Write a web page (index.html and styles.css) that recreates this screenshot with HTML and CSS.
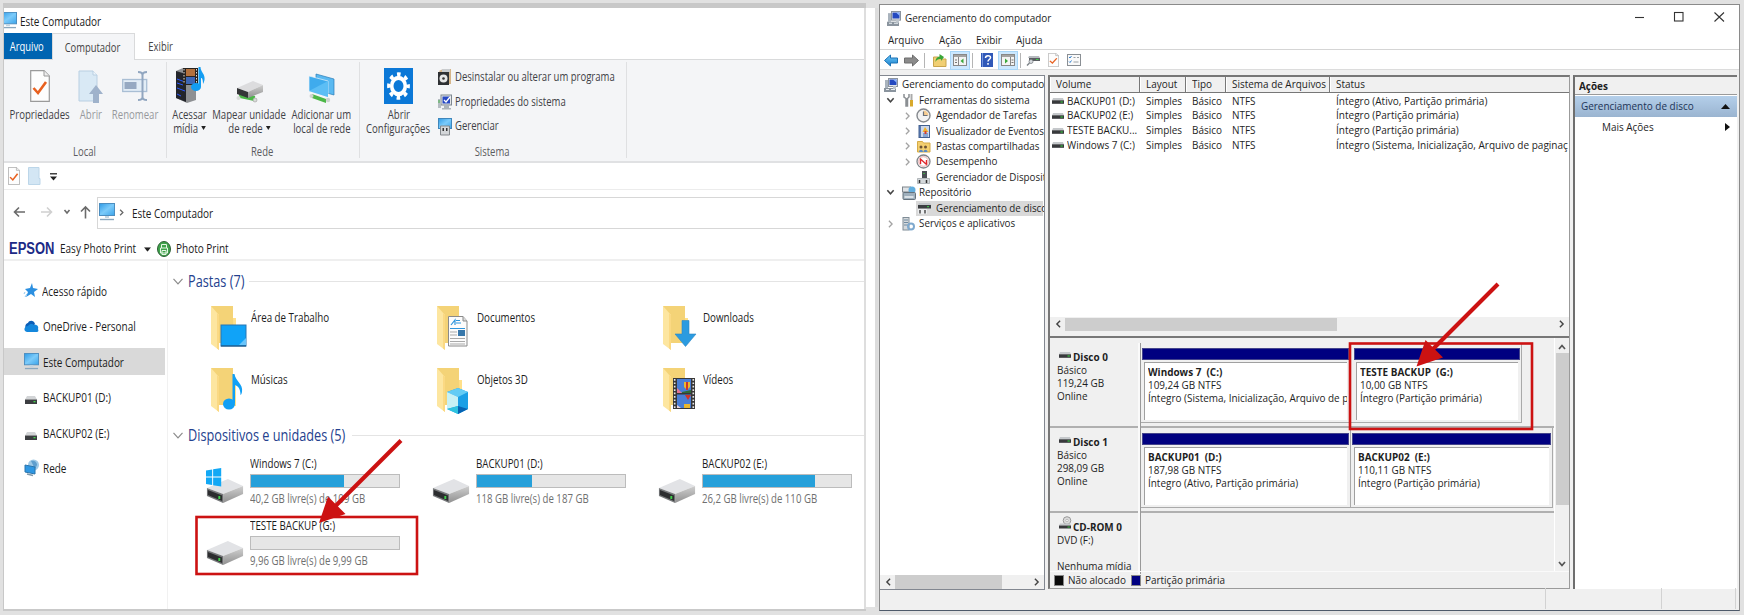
FILE: index.html
```html
<!DOCTYPE html>
<html lang="pt-BR">
<head>
<meta charset="utf-8">
<title>Este Computador</title>
<link rel="stylesheet" href="styles.css">
</head>
<body>
<svg class="defs" width="0" height="0" aria-hidden="true">
  <defs>
    <linearGradient id="gScreen" x1="0" y1="0" x2="1" y2="1"><stop offset="0" stop-color="#2f9be6"/><stop offset=".5" stop-color="#7ccbfa"/><stop offset="1" stop-color="#3aa4ea"/></linearGradient>
    <linearGradient id="gSide" x1="0" y1="0" x2="0" y2="1"><stop offset="0" stop-color="#cfcfcf"/><stop offset="1" stop-color="#909090"/></linearGradient>
    <linearGradient id="gArrow" x1="0" y1="0" x2="0" y2="1"><stop offset="0" stop-color="#6fc8f7"/><stop offset="1" stop-color="#1a82cf"/></linearGradient>
    <symbol id="pc" viewBox="0 0 16 18"><rect x=".5" y=".5" width="15" height="12" fill="url(#gScreen)" stroke="#4c8ec0"/><path d="M6 13h4v2H6z" fill="#c3d4e0"/><path d="M1 16.5h14" stroke="#8aa7be" stroke-width="1.4"/></symbol>
    <symbol id="folder" viewBox="0 0 36 46"><path d="M1 1H23V13H26V38H8Z" fill="#f4d377"/><path d="M23 13l3 0v26h-2z" fill="#ffe08a"/><path d="M1 1L9 10V45L1 39Z" fill="#fde6a0"/><path d="M9 10V45L7 43.500V8z" fill="#fbd983"/></symbol>
    <symbol id="drive" viewBox="0 0 40 26"><path d="M1 10L23 1L39 8L18 16Z" fill="#e2e3e6"/><path d="M18 16L39 8V16L18 25Z" fill="url(#gSide)"/><path d="M1 10L18 16V25L1 18Z" fill="#77797b"/><path d="M2 12L17 17.500V23L2 17Z" fill="#2c2d2f"/><rect x="13" y="18" width="2" height="3" fill="#3fd04a"/></symbol>
    <symbol id="sdrive" viewBox="0 0 12 8"><path d="M2 0H10L12 3.500H0Z" fill="#d2d4d6"/><rect y="3.500" width="12" height="4.500" fill="#3c3e41"/><rect x="8.500" y="5" width="2" height="1.300" fill="#41d449"/></symbol>
    <symbol id="mdrive" viewBox="0 0 12 6"><path d="M1 0H11L12 2.500H0Z" fill="#c5c8cb"/><rect y="2.300" width="12" height="3.500" fill="#38393c"/><rect x="8.500" y="3.400" width="2.300" height="1.200" fill="#37c540"/></symbol>
    <symbol id="page" viewBox="0 0 20 32"><path d="M.7.7H14L19.300 6V31.300H.7Z" fill="#fdfdfd" stroke="#9a9a9a" stroke-width="1.200"/><path d="M14 .7V6H19.300" fill="#eee" stroke="#9a9a9a"/><path d="M3.500 18l4.500 5 8-11" fill="none" stroke="#e8601f" stroke-width="2.600"/></symbol>
    <symbol id="mmc" viewBox="0 0 14 14"><rect x="4.500" y=".5" width="9" height="8" fill="#dfe3e8" stroke="#8b949e"/><rect x="5.500" y="1.500" width="7" height="5.500" fill="#2449c0"/><path d="M9 1.500l3.500 0v3z" fill="#8fb8ff"/><rect x="1" y="2" width="3" height="8" fill="#a9b3bd"/><path d="M0 10h12v4H0z" fill="#8a949e"/><path d="M2 11.500h3M7 11.500h4" stroke="#e8edf2"/><path d="M9 8h3v3H9z" fill="#bfc6cd"/></symbol>
    <symbol id="right" viewBox="0 0 6 10"><path d="M1 1l4 4-4 4" fill="none" stroke="#a3a3a3" stroke-width="1.600"/></symbol>
    <symbol id="down" viewBox="0 0 10 7"><path d="M1.500 1L5 5l3.500-4" fill="none" stroke="#444" stroke-width="1.700"/></symbol>
    <symbol id="caret" viewBox="0 0 10 7"><path d="M.5 .8L5 5.800l4.500-5" fill="none" stroke="#8c8c8c" stroke-width="1.200"/></symbol>
    <symbol id="tri" viewBox="0 0 6 4"><path d="M0 0h6L3 4z" fill="#222"/></symbol>
  </defs>
</svg>

<div class="desk">
<!-- File explorer -->
<section class="explorer">
  <header class="ex-title"><svg class="cut" width="13" height="17" viewBox="3 0 13 18" preserveAspectRatio="none"><rect x="0" y=".5" width="15.500" height="12" fill="url(#gScreen)" stroke="#4c8ec0"/><path d="M5 13h4v2H5z" fill="#c3d4e0"/><path d="M0 16.500h15" stroke="#8aa7be" stroke-width="1.400"/></svg><span class="t big">Este Computador</span></header>
  <nav class="tabs"><span class="tab file"><b class="t">Arquivo</b></span><span class="tab on"><b class="t wide">Computador</b></span><span class="tab"><b class="t">Exibir</b></span></nav>
  <div class="ribbon">
    <div class="group g-local">
      <div class="btns">
        <div class="btn w-prop"><div class="ic"><svg width="20" height="32"><use href="#page"/></svg></div><span class="t">Propriedades</span></div>
        <div class="btn off w-abrir"><div class="ic"><svg width="26" height="34" viewBox="0 0 26 34"><path d="M1 1H15L19 5V31H1Z" fill="#d9e9f5" stroke="#b9cfe2"/><path d="M15 1v4h4" fill="#eef5fb" stroke="#b9cfe2"/><path d="M18 15L25 24H21V33H15V24H11Z" fill="#9fb2cb"/></svg></div><span class="t">Abrir</span></div>
        <div class="btn off w-ren"><div class="ic"><svg width="26" height="32" viewBox="0 0 26 32"><rect x=".7" y="9.500" width="24" height="12" fill="#e2edf6" stroke="#a9bed4" stroke-width="1.300"/><rect x="2.500" y="12" width="12" height="7" fill="#96a9c2"/><path d="M16 2c3 0 4.500 1 4.500 3v22c0 2-1.500 3-4.500 3M25 2c-3 0-4.500 1-4.500 3v22c0 2 1.500 3 4.500 3" fill="none" stroke="#91a6c0" stroke-width="2"/></svg></div><span class="t">Renomear</span></div>
      </div>
      <div class="cap"><span class="t">Local</span></div>
    </div>
    <div class="group g-rede">
      <div class="btns">
        <div class="btn w-media"><div class="ic"><svg width="28" height="36" viewBox="0 0 28 36"><path d="M0 4l7-3 13 3v29l-9 3-11-5z" fill="#8e9093"/><path d="M0 4l10 3v28L0 31z" fill="#23252b"/><path d="M1 12l8 3M1 16l6 2M1 21l8 3M1 27l4 2" stroke="#2a58ff"/><rect x="7" y="1" width="15" height="17" fill="#27231f"/><rect x="10" y="2" width="9" height="7" fill="#b4713c"/><rect x="10" y="10" width="9" height="7" fill="#3d66b4"/><path d="M8 2v15M20.500 2v15" stroke="#ddd" stroke-dasharray="1.500 1.500"/><ellipse cx="20" cy="20" rx="5" ry="4" fill="#139df2"/><path d="M22.500 0h2c0 5 5 7 4 13-.5 2-1 3-1.500 4 0-5-1-6-2-6v9h-2.500z" fill="#139df2"/></svg></div><span class="t">Acessar</span><span class="t">mídia <svg class="dd" width="6" height="4"><use href="#tri"/></svg></span></div>
        <div class="btn w-map"><div class="ic low"><svg width="28" height="24" viewBox="0 0 28 24"><path d="M3 14h16v5H3z" fill="#4cb748" transform="rotate(12 9 16)"/><circle cx="19" cy="20" r="2" fill="#d9dcd9" stroke="#9a9a9a" stroke-width=".6"/><circle cx="2.500" cy="18" r="2" fill="#d9dcd9"/><path d="M1 8L17 1L27 5L12 12Z" fill="#dcdcde"/><path d="M12 12L27 5V12L12 18Z" fill="url(#gSide)"/><path d="M1 8L12 12V18L1 14Z" fill="#343537"/></svg></div><span class="t">Mapear unidade</span><span class="t">de rede <svg class="dd" width="6" height="4"><use href="#tri"/></svg></span></div>
        <div class="btn w-add"><div class="ic"><svg width="28" height="30" viewBox="0 0 28 30"><path d="M8 1L26 6V22L8 17Z" fill="#5ab9f1" stroke="#2a7db8" stroke-width=".7"/><path d="M1 3L20 8V24L1 18Z" fill="#3fabed" stroke="#e8f4fb" stroke-width=".7"/><path d="M1 18L20 8V24z" fill="#5cbef5"/><path d="M4 21l14 5v4L4 25z" fill="#4cb748"/><circle cx="20" cy="27" r="2.200" fill="#cfd3d0"/><circle cx="3.500" cy="23" r="2" fill="#cfd3d0"/></svg></div><span class="t">Adicionar um</span><span class="t">local de rede</span></div>
      </div>
      <div class="cap"><span class="t">Rede</span></div>
    </div>
    <div class="group g-sys">
      <div class="sysrow">
        <div class="btn w-conf"><div class="ic"><svg class="gear" width="29" height="36" viewBox="0 0 29 36" preserveAspectRatio="none"><rect width="29" height="36" fill="#0b78d7"/><g transform="translate(14.500 18) scale(1 1.200)"><circle r="6.800" fill="none" stroke="#fff" stroke-width="3.600"/><circle r="9.800" fill="none" stroke="#fff" stroke-width="3.200" stroke-dasharray="3.600 4.097" stroke-dashoffset="1.800"/></g></svg></div><span class="t">Abrir</span><span class="t">Configurações</span></div>
        <ul class="links">
          <li><svg width="14" height="18" viewBox="0 0 14 18"><path d="M1 3l4-2h8v15h-3z" fill="#d5b58a"/><path d="M4 1h8v3H4z" fill="#c9cccf"/><rect y="4" width="11" height="13" fill="#2e3033"/><circle cx="5.500" cy="10.500" r="4" fill="#e6e6e6"/><circle cx="5.500" cy="10.500" r="1.300" fill="#333"/></svg><span class="t wide">Desinstalar ou alterar um programa</span></li>
          <li><svg width="14" height="16" viewBox="0 0 14 16"><rect x="3" y="1" width="10.500" height="10" fill="#e4e6e8" stroke="#7d8790"/><rect x="4.500" y="2.500" width="7.500" height="7" fill="#2748c4"/><path d="M6 6l2 2 4-5" fill="none" stroke="#fff" stroke-width="1.300"/><path d="M0 5h3v9H0z" fill="#b5bcc2"/><path d="M1 6v3" stroke="#46b24a"/><path d="M6 11h5v3H6zM4 14h9v1.500H4z" fill="#adb4ba"/></svg><span class="t wide">Propriedades do sistema</span></li>
          <li><svg width="14" height="17" viewBox="0 0 14 17"><rect x=".5" y=".5" width="13" height="10" fill="url(#gScreen)" stroke="#3f86bb"/><path d="M2.500 8h9v9h-9z" fill="#d3d6d9" stroke="#84898d"/><path d="M4.500 10h1.500v3H4.500zM8 10h1.500v3H8z" fill="#333"/></svg><span class="t wide">Gerenciar</span></li>
        </ul>
      </div>
      <div class="cap"><span class="t">Sistema</span></div>
    </div>
  </div>
  <div class="qat"><svg width="12" height="18" viewBox="0 0 20 32" preserveAspectRatio="none"><use href="#page" width="20" height="32"/></svg><svg width="12" height="18" viewBox="0 0 12 18"><path d="M.5.500H11V11.500H12V17.500H.5Z" fill="#d3e6f4" stroke="#bcd6e9"/></svg><svg width="7" height="8" viewBox="0 0 7 8"><path d="M0 .8h7" stroke="#222" stroke-width="1.300"/><path d="M0 3.500h7L3.500 7.500z" fill="#222"/></svg></div>
  <div class="addr">
    <svg class="nav" width="84" height="14" viewBox="0 0 84 14"><g fill="none" stroke="#6b6b6b" stroke-width="1.600"><path d="M12 7H2M6 2.500L1.500 7L6 11.500"/><path d="M28 7h10M34 2.500L38.500 7L34 11.500" stroke="#d0d0d0"/><path d="M51.500 5l2.500 3L56.500 5"/><path d="M72.500 13.500V2M68 6.500L72.500 2L77 6.500"/></g></svg>
    <div class="box"><svg width="16" height="18"><use href="#pc"/></svg><svg class="sep" width="5" height="7" viewBox="0 0 6 10"><path d="M1 1l4 4-4 4" fill="none" stroke="#666" stroke-width="1.800"/></svg><span class="t big">Este Computador</span></div>
  </div>
  <div class="epson"><span class="brand"><b>EPSON</b></span><span class="easy"><i class="t">Easy Photo Print</i></span><svg width="7" height="5" viewBox="0 0 6 4"><use href="#tri" width="6" height="4"/></svg><svg class="pp" width="14" height="16" viewBox="0 0 14 16"><ellipse cx="7" cy="8" rx="6.500" ry="7.500" fill="#3fa34b" stroke="#2f5e37"/><path d="M4.500 7V3.500h5V7M3.500 7h7v5h-7zM5 9.500h4v4H5z" fill="none" stroke="#e6f6e6"/></svg><span class="t">Photo Print</span></div>
  <div class="body">
    <aside class="side">
      <div class="item"><svg width="14" height="15" viewBox="0 0 14 15"><path d="M8 0l1 5 5 1-4 3 1 5-4-3-5 3 2-5-3-3 5-1z" fill="#2b8fe0"/><path d="M1 9l-1 2M3 11l-2 3" stroke="#8ec6f0"/></svg><span class="t">Acesso rápido</span></div>
      <div class="item"><svg width="15" height="12" viewBox="0 0 15 12"><path d="M2 9C0 5 3 3 4 3c1-3 6-3 7 1l-5 6z" fill="#0c5fb8"/><path d="M3 12c-4-1-3-6 1-6 2-3 5-2 6-1 3-1 5 2 4 4 1 2 0 3-1 3z" fill="#1487dc"/></svg><span class="t">OneDrive - Personal</span></div>
      <div class="item sel"><svg width="15" height="17"><use href="#pc"/></svg><span class="t">Este Computador</span></div>
      <div class="item dr"><svg width="12" height="8"><use href="#sdrive"/></svg><span class="t">BACKUP01 (D:)</span></div>
      <div class="item dr"><svg width="12" height="8"><use href="#sdrive"/></svg><span class="t">BACKUP02 (E:)</span></div>
      <div class="item"><svg width="15" height="18" viewBox="0 0 15 18"><circle cx="9.500" cy="6" r="5.500" fill="#9fc9e6"/><path d="M7 2c2-1 6 0 6 4l-2 4z" fill="#5f9fce"/><path d="M1 6l10 2v7L1 13z" fill="#2f97e2" stroke="#2a74ac"/><path d="M3 15l6 1.500" stroke="#7f98aa" stroke-width="1.500"/></svg><span class="t">Rede</span></div>
    </aside>
    <main class="content">
      <h2 class="h-past"><svg width="10" height="7"><use href="#caret"/></svg><span class="hw"><b class="t">Pastas (7)</b></span></h2>
      <div class="grid folders">
        <div class="fold"><div class="fi"><svg width="36" height="46" viewBox="0 0 36 46"><use href="#folder" width="36" height="46"/><rect x="11" y="20" width="25" height="21" fill="#10a3f8" stroke="#2677b4"/><path d="M36 33v7h-7z" fill="#69c5fb"/><path d="M11 41h25" stroke="#1b4e7c"/></svg></div><span class="t">Área de Trabalho</span></div>
        <div class="fold"><div class="fi"><svg width="36" height="46" viewBox="0 0 36 46"><use href="#folder" width="36" height="46"/><path d="M12.500 11.500H27L31 16V41H12.500Z" fill="#fcfcfc" stroke="#8b8b8b"/><path d="M27 11.500V16h4" fill="#ddd" stroke="#8b8b8b"/><path d="M15 20l4-5v5M20 18h5M20 15.500h4M14 23.500h15" fill="none" stroke="#2d95dd" stroke-width="1.200"/><path d="M14 27h7M14 30h7M14 33.500h15M14 36.500h15M14 39h15" stroke="#a9a9a9"/><rect x="22" y="25" width="7" height="6" fill="#3878ab"/></svg></div><span class="t">Documentos</span></div>
        <div class="fold"><div class="fi"><svg width="36" height="46" viewBox="0 0 36 46"><use href="#folder" width="36" height="46"/><path d="M20 15.500h7V29h7L23.500 41.500L13 29h7z" fill="#2b9be0" stroke="#2b87c5" stroke-width=".6"/></svg></div><span class="t">Downloads</span></div>
        <div class="fold"><div class="fi"><svg width="36" height="46" viewBox="0 0 36 46"><use href="#folder" width="36" height="46"/><path d="M22.500 7h2c1 7 9 10 7.500 18-.4 2-1 3-1.500 3 0-7-3-9-5.500-10v18h-2.500z" fill="#11a0f5"/><ellipse cx="19" cy="37" rx="6" ry="5.500" fill="#11a0f5"/></svg></div><span class="t">Músicas</span></div>
        <div class="fold"><div class="fi"><svg width="36" height="48" viewBox="0 0 36 48"><use href="#folder" width="36" height="46"/><path d="M11 25L22 21L32 25V42L22 47L11 42Z" fill="#1a9fe6"/><path d="M11 25L22 21L32 25L22 30Z" fill="#63ccf5"/><path d="M11 25L22 30V39L11 42Z" fill="#c7f1f5"/><path d="M11 42L22 39V47Z" fill="#2fc3df"/><path d="M22 39L32 42L22 47Z" fill="#0663b3"/></svg></div><span class="t">Objetos 3D</span></div>
        <div class="fold"><div class="fi"><svg width="36" height="46" viewBox="0 0 36 46"><use href="#folder" width="36" height="46"/><rect x="11" y="11" width="22" height="31" fill="#383737"/><path d="M12.700 12v29M31.300 12v29" stroke="#e8e8e8" stroke-width="1.600" stroke-dasharray="1.700 1.700"/><path d="M15 12h14v14H15zM15 27.500h14V41H15z" fill="#4a7ed6"/><path d="M22 15h6v5l-3 3-3-3z" fill="#eab730"/><path d="M24 15h2v8h-2zM23 28h6l-3 5z" fill="#cf3428"/><path d="M15 21l5 5h-5z" fill="#e57694"/><path d="M20 25l9-2v3h-9z" fill="#2f6b36"/><path d="M22 37h6v4h-6z" fill="#eab730"/><path d="M15 38l4 3h-4z" fill="#e9d4dc"/></svg></div><span class="t">Vídeos</span></div>
      </div>
      <h2 class="h-dev"><svg width="10" height="7"><use href="#caret"/></svg><span class="hw"><b class="t">Dispositivos e unidades (5)</b></span></h2>
      <div class="grid drives">
        <div class="drv"><div class="di"><svg width="38" height="36" viewBox="0 0 40 36" preserveAspectRatio="none"><use href="#drive" y="10" width="40" height="26"/><path d="M0 2.500L6.500 1.500V8.500H0zM7.500 1.300L16 0V8.500H7.500zM0 9.500H6.500V17L0 16zM7.500 9.500H16V18.500L7.500 17.200z" fill="#12a8f5"/></svg></div><div class="dt"><span class="t">Windows 7 (C:)</span><div class="bar"><i style="width:62.500%"></i></div><span class="t free">40,2 GB livre(s) de 109 GB</span></div></div>
        <div class="drv"><div class="di"><svg width="38" height="26" viewBox="0 0 40 26" preserveAspectRatio="none"><use href="#drive" width="40" height="26"/></svg></div><div class="dt"><span class="t">BACKUP01 (D:)</span><div class="bar"><i style="width:37%"></i></div><span class="t free">118 GB livre(s) de 187 GB</span></div></div>
        <div class="drv"><div class="di"><svg width="38" height="26" viewBox="0 0 40 26" preserveAspectRatio="none"><use href="#drive" width="40" height="26"/></svg></div><div class="dt"><span class="t">BACKUP02 (E:)</span><div class="bar"><i style="width:76%"></i></div><span class="t free">26,2 GB livre(s) de 110 GB</span></div></div>
        <div class="drv"><div class="di"><svg width="38" height="26" viewBox="0 0 40 26" preserveAspectRatio="none"><use href="#drive" width="40" height="26"/></svg></div><div class="dt"><span class="t">TESTE BACKUP (G:)</span><div class="bar"><i style="width:0%"></i></div><span class="t free">9,96 GB livre(s) de 9,99 GB</span></div></div>
      </div>
    </main>
  </div>
</section>
<div class="gutter"></div>

<!-- Computer management console -->
<section class="mmc">
  <header class="m-title"><svg width="14" height="15" viewBox="0 0 14 14" preserveAspectRatio="none"><use href="#mmc" width="14" height="14"/></svg><span class="t">Gerenciamento do computador</span>
    <svg class="ctl" width="92" height="12" viewBox="0 0 92 12"><g fill="none" stroke="#333" stroke-width="1.100"><path d="M1 6.500h9"/><rect x="40.500" y="1.500" width="8.500" height="8.500"/><path d="M80.500 1.500l9.500 9M90 1.500l-9.500 9"/></g></svg></header>
  <nav class="menu"><span class="t">Arquivo</span><span class="t">Ação</span><span class="t">Exibir</span><span class="t">Ajuda</span></nav>
  <div class="tools">
    <svg width="14" height="13" viewBox="0 0 14 13"><path d="M.5 6.500L6.500 1v3H13.500v5H6.500v3z" fill="url(#gArrow)" stroke="#1c72b5"/></svg>
    <svg class="a2" width="15" height="13" viewBox="0 0 15 13"><path d="M14.500 6.500L8.500 1v3H.5v5H8.500v3z" fill="#8b8b8b" stroke="#6e6e6e"/></svg>
    <i class="bar-v v1"></i>
    <svg class="a3" width="14" height="14" viewBox="0 0 14 14"><path d="M.5 4h5l1 2h6.500v7.500H.5z" fill="#f1cf73" stroke="#c9a54e"/><path d="M2.500 9c0-4 2-5 4-5.500V1L11 4 8 8V6C6 6 4 6 2.500 9z" fill="#3aa637"/></svg>
    <span class="hot"><svg width="14" height="12" viewBox="0 0 14 12"><rect x=".5" y=".5" width="13" height="11" fill="#f4f4f4" stroke="#888"/><path d="M1 2h12" stroke="#888" stroke-width="1.500"/><path d="M5.500 3v9" stroke="#888"/><path d="M2 6h2M2 8.500h2" stroke="#777"/><path d="M10.500 4.500v5L7.500 7z" fill="#3aa83c"/></svg></span>
    <i class="bar-v v2"></i>
    <svg class="a4" width="12" height="14" viewBox="0 0 12 14"><rect width="12" height="14" fill="#3058b8"/><path d="M1.500 0v14" stroke="#7595dd"/><path d="M4.500 5c0-3 5-3 5-.5C9.500 6.500 7 6.500 7 8.500M7 10v1.800" fill="none" stroke="#fff" stroke-width="1.500"/></svg>
    <span class="hot h2"><svg width="14" height="12" viewBox="0 0 14 12"><rect x=".5" y=".5" width="13" height="11" fill="#f4f4f4" stroke="#888"/><path d="M1 2h12" stroke="#888" stroke-width="1.500"/><path d="M9.500 3v9" stroke="#888"/><path d="M10.500 6h2M10.500 8.500h2" stroke="#777"/><path d="M4 4.500v5L7 7z" fill="#3aa83c"/></svg></span>
    <i class="bar-v v3"></i>
    <svg class="a5" width="13" height="12" viewBox="0 0 13 12"><path d="M2 2h10l1 2H1z" fill="#b7bbbf"/><rect x="2" y="4" width="11" height="3" fill="#5b5e62"/><path d="M9 5.500h2.500" stroke="#3fd04a"/><circle cx="4" cy="7.500" r="2" fill="#d6dade" stroke="#7c8287" stroke-width=".8"/><path d="M0 11.500l2.500-2.500" stroke="#7c8287" stroke-width="1.500"/></svg>
    <svg class="a6" width="11" height="14" viewBox="0 0 20 32" preserveAspectRatio="none"><use href="#page" width="20" height="32"/></svg>
    <svg class="a7" width="14" height="12" viewBox="0 0 14 12"><rect x=".5" y=".5" width="13" height="11" fill="#fafafa" stroke="#8a8f94"/><path d="M2 3l1 1 1.500-2M2 7.500l1 1 1.500-2" fill="none" stroke="#2e7fd0"/><path d="M6.500 3.500h2M6.500 8h5M10 3.500h2" stroke="#9aa0a5"/></svg>
  </div>
  <div class="panes">
    <div class="tree">
      <ul>
        <li class="l0"><span class="ti"><svg width="14" height="14"><use href="#mmc"/></svg></span><span class="t">Gerenciamento do computado</span></li>
        <li class="l1"><svg class="ch" width="9" height="7"><use href="#down"/></svg><span class="ti"><svg width="11" height="14" viewBox="0 0 11 14"><path d="M1 1v3l2 1.500V13h1.500V5.500L6 4V1" fill="none" stroke="#8b8f93" stroke-width="1.500"/><path d="M8.500 1v7" stroke="#aaa" stroke-width="2"/><path d="M8.500 7v6.500" stroke="#d8a92c" stroke-width="3"/></svg></span><span class="t">Ferramentas do sistema</span></li>
        <li class="l2"><svg class="ch" width="5" height="8"><use href="#right"/></svg><span class="ti"><svg width="15" height="15" viewBox="0 0 15 15"><circle cx="7.500" cy="7.500" r="6.500" fill="#f3f3f3" stroke="#85898e" stroke-width="1.400"/><path d="M7.500 7.500V2.500a5 5 0 0 1 5 5z" fill="#f7cd92"/><path d="M7.500 3.500v4h4" fill="none" stroke="#6b7079" stroke-width="1.200"/></svg></span><span class="t">Agendador de Tarefas</span></li>
        <li class="l2"><svg class="ch" width="5" height="8"><use href="#right"/></svg><span class="ti"><svg width="12" height="13" viewBox="0 0 12 13"><rect x="1" y=".5" width="10.500" height="12" fill="#cbd7ea" stroke="#42608f"/><path d="M2 1v11" stroke="#3d5f9b" stroke-width="1.500"/><path d="M7 2l3.500 5h-6z" fill="#f2b229"/><path d="M5 9h5M5 11h5" stroke="#4471b5"/><rect x="6.500" y="6" width="2" height="3" fill="#d6402f"/></svg></span><span class="t">Visualizador de Eventos</span></li>
        <li class="l2"><svg class="ch" width="5" height="8"><use href="#right"/></svg><span class="ti"><svg width="14" height="13" viewBox="0 0 14 13"><path d="M.5 1.500h5l1 1.500h6.500v9H.5z" fill="#f4cf6f" stroke="#d5ab47"/><circle cx="4" cy="7" r="1.500" fill="#6d5435"/><circle cx="8.500" cy="7" r="1.500" fill="#6d5435"/><path d="M2 12c0-3 4-3 4 0zM6.500 12c0-3 4-3 4 0z" fill="#5a8bc4"/></svg></span><span class="t">Pastas compartilhadas</span></li>
        <li class="l2"><svg class="ch" width="5" height="8"><use href="#right"/></svg><span class="ti"><svg width="15" height="15" viewBox="0 0 15 15"><circle cx="7.500" cy="7.500" r="6.500" fill="#fff" stroke="#7f8489" stroke-width="1.300"/><path d="M4.500 10V5l6 5.500V6" fill="none" stroke="#e0262b" stroke-width="1.400"/><circle cx="7.500" cy="7.500" r="4.800" fill="none" stroke="#d9777a" stroke-width=".6"/></svg></span><span class="t">Desempenho</span></li>
        <li class="l2"><i class="ch nil"></i><span class="ti"><svg width="13" height="13" viewBox="0 0 13 13"><rect x="5" y="0" width="5" height="7" fill="#4b5054"/><path d="M.5 7.500h12v5H.5z" fill="#d4d8db" stroke="#9aa0a5" stroke-width=".7"/><path d="M2.500 9v3M9.500 9v3" stroke="#333" stroke-width="1.500"/><path d="M7 2v1" stroke="#42c549" stroke-width="1.500"/></svg></span><span class="t">Gerenciador de Disposit</span></li>
        <li class="l1"><svg class="ch" width="9" height="7"><use href="#down"/></svg><span class="ti"><svg width="14" height="14" viewBox="0 0 14 14"><rect x=".5" y="1" width="8" height="5" fill="#dfe3e6" stroke="#7f868c"/><circle cx="10" cy="4" r="3.500" fill="#62aede"/><rect x="1" y="6.500" width="12.500" height="7" rx="1" fill="#9fb0bd" stroke="#65727c"/><path d="M2.500 11h9" stroke="#eef3f6" stroke-width="1.500"/></svg></span><span class="t">Repositório</span></li>
        <li class="l2 cur"><i class="ch nil"></i><span class="ti"><svg width="14" height="12" viewBox="0 0 14 12"><path d="M2 1h11l1 2H1z" fill="#c2c6c9"/><rect x="1" y="3" width="13" height="3.500" fill="#3b3e41"/><path d="M10 4.700h2" stroke="#3fd04a"/><path d="M1 7h9v5H1z" fill="#eceef0"/><path d="M3 8v3.500M8 8v3.500" stroke="#333" stroke-width="1.300"/></svg></span><span class="t">Gerenciamento de disco</span></li>
        <li class="l1"><svg class="ch" width="5" height="8"><use href="#right"/></svg><span class="ti"><svg width="13" height="14" viewBox="0 0 13 14"><rect x="1" y=".5" width="6" height="12.500" fill="#d5d9dc" stroke="#7f8c96"/><path d="M2 3h4M2 5.500h4M2 8h4" stroke="#6f8aa0"/><circle cx="9" cy="9.500" r="3" fill="none" stroke="#7fa9ce" stroke-width="2"/></svg></span><span class="t">Serviços e aplicativos</span></li>
      </ul>
      <div class="hs"><svg width="5" height="8" viewBox="0 0 6 10"><path d="M5 1L1 5l4 4" fill="none" stroke="#444" stroke-width="1.800"/></svg><i class="thumb"></i><svg width="5" height="8" viewBox="0 0 6 10"><path d="M1 1l4 4-4 4" fill="none" stroke="#444" stroke-width="1.800"/></svg></div>
    </div>
    <div class="center">
      <table class="vols">
        <thead><tr><th><span class="t">Volume</span></th><th><span class="t">Layout</span></th><th><span class="t">Tipo</span></th><th><span class="t">Sistema de Arquivos</span></th><th><span class="t">Status</span></th></tr></thead>
        <tbody>
          <tr><td><svg width="12" height="6"><use href="#mdrive"/></svg><span class="t">BACKUP01 (D:)</span></td><td><span class="t">Simples</span></td><td><span class="t">Básico</span></td><td><span class="t">NTFS</span></td><td><span class="t">Íntegro (Ativo, Partição primária)</span></td></tr>
          <tr><td><svg width="12" height="6"><use href="#mdrive"/></svg><span class="t">BACKUP02 (E:)</span></td><td><span class="t">Simples</span></td><td><span class="t">Básico</span></td><td><span class="t">NTFS</span></td><td><span class="t">Íntegro (Partição primária)</span></td></tr>
          <tr><td><svg width="12" height="6"><use href="#mdrive"/></svg><span class="t">TESTE BACKU...</span></td><td><span class="t">Simples</span></td><td><span class="t">Básico</span></td><td><span class="t">NTFS</span></td><td><span class="t">Íntegro (Partição primária)</span></td></tr>
          <tr><td><svg width="12" height="6"><use href="#mdrive"/></svg><span class="t">Windows 7 (C:)</span></td><td><span class="t">Simples</span></td><td><span class="t">Básico</span></td><td><span class="t">NTFS</span></td><td><span class="t">Íntegro (Sistema, Inicialização, Arquivo de paginaç</span></td></tr>
        </tbody>
      </table>
      <div class="hs"><svg width="5" height="8" viewBox="0 0 6 10"><path d="M5 1L1 5l4 4" fill="none" stroke="#444" stroke-width="1.800"/></svg><i class="thumb"></i><svg width="5" height="8" viewBox="0 0 6 10"><path d="M1 1l4 4-4 4" fill="none" stroke="#444" stroke-width="1.800"/></svg></div>
      <div class="disks">
        <div class="rows">
          <div class="disk"><div class="lab"><div class="nm"><svg width="12" height="6"><use href="#mdrive"/></svg><b class="t">Disco 0</b></div><span class="t">Básico</span><span class="t">119,24 GB</span><span class="t">Online</span></div>
            <div class="parts d0"><div class="part p1"><div class="blue"></div><div class="inner"><b class="t">Windows 7&nbsp; (C:)</b><span class="t">109,24 GB NTFS</span><span class="t">Íntegro (Sistema, Inicialização, Arquivo de p</span></div></div><div class="part p2"><div class="blue"></div><div class="inner"><b class="t">TESTE BACKUP&nbsp; (G:)</b><span class="t">10,00 GB NTFS</span><span class="t">Íntegro (Partição primária)</span></div></div></div></div>
          <div class="disk"><div class="lab"><div class="nm"><svg width="12" height="6"><use href="#mdrive"/></svg><b class="t">Disco 1</b></div><span class="t">Básico</span><span class="t">298,09 GB</span><span class="t">Online</span></div>
            <div class="parts d1"><div class="part p1"><div class="blue"></div><div class="inner"><b class="t">BACKUP01&nbsp; (D:)</b><span class="t">187,98 GB NTFS</span><span class="t">Íntegro (Ativo, Partição primária)</span></div></div><div class="part p2"><div class="blue"></div><div class="inner"><b class="t">BACKUP02&nbsp; (E:)</b><span class="t">110,11 GB NTFS</span><span class="t">Íntegro (Partição primária)</span></div></div></div></div>
          <div class="disk cd"><div class="lab"><div class="nm"><svg class="cdi" width="12" height="13" viewBox="0 0 12 13"><circle cx="8" cy="4.500" r="3.800" fill="#dcdcdc" stroke="#999"/><circle cx="8" cy="4.500" r="1.200" fill="#fff" stroke="#999" stroke-width=".6"/><path d="M1 7.500h10l1 2H0z" fill="#c5c8cb"/><path d="M0 9.500h12v3H0z" fill="#38393c"/><path d="M8.500 11h2.300" stroke="#37c540"/></svg><b class="t">CD-ROM 0</b></div><span class="t">DVD (F:)</span><span class="t">&nbsp;</span><span class="t">Nenhuma mídia</span></div><div class="parts"></div></div>
        </div>
        <div class="vs"><svg width="8" height="6" viewBox="0 0 8 6"><path d="M1 5l3-3.500L7 5" fill="none" stroke="#555" stroke-width="1.700"/></svg><i></i><svg width="8" height="6" viewBox="0 0 8 6"><path d="M1 1l3 3.500L7 1" fill="none" stroke="#555" stroke-width="1.700"/></svg></div>
      </div>
      <div class="legend"><i class="k"></i><span class="t n1">Não alocado</span><i class="k b"></i><span class="t">Partição primária</span></div>
    </div>
    <div class="actions">
      <div class="ah"><b class="t">Ações</b></div>
      <div class="ab"><span class="t">Gerenciamento de disco</span><svg width="9" height="5" viewBox="0 0 9 5"><path d="M0 5h9L4.500 0z" fill="#111"/></svg></div>
      <div class="am"><span class="t">Mais Ações</span><svg width="5" height="8" viewBox="0 0 5 8"><path d="M0 0v8l5-4z" fill="#111"/></svg></div>
    </div>
  </div>
  <footer class="status"><i></i><i></i><i></i></footer>
</section>
</div>

<!-- Red callouts over both windows -->
<svg class="marks" width="1744" height="615" viewBox="0 0 1744 615"><g fill="none" stroke="#cc1212" stroke-width="2.600"><rect x="196.500" y="517" width="220.500" height="57"/><rect x="1350" y="343.500" width="182" height="85.500"/></g><g stroke="#cc1212" stroke-width="4"><path d="M401 440.500L335 506.500"/><path d="M1498 284L1432 350"/></g><g fill="#cc1212"><path d="M319 523L328 496.500L345.500 514z"/><path d="M1416.500 366.500L1425.500 340L1443 357.500z"/></g></svg>
</body>
</html>
```
FILE: styles.css
```css
* { box-sizing: border-box; }
body { margin: 0; background: #e1e1e1; font-family: "Open Sans", "Noto Sans", sans-serif; overflow: hidden; }
ul { list-style: none; margin: 0; padding: 0; }
svg { display: block; flex: none; overflow: visible; }
svg.cut { overflow: hidden; }
.defs { position: absolute; }
.desk { display: flex; width: 1744px; height: 615px; }
.t { display: inline-block; white-space: nowrap; font-style: normal; font-weight: 400; transform: scaleX(var(--sx)); transform-origin: 0 50%; flex: none; }

/* explorer */
.explorer { --sx: .79; width: 863px; height: 608px; margin-top: 3px; border-style: solid; border-width: 5px 0 2px 1px; border-color: #c8c8c8 #fff #c9c9c9 #c8c8c8; margin-left: 3px; background: #fff; color: #1c1c1c; font-size: 12px; line-height: 16px; box-shadow: inset -2px 0 0 #dedede; display: flex; flex-direction: column; flex: none; }
.gutter { width: 12px; height: 599px; margin-top: 8px; background: #fff; border-right: 3px solid #dcdcdc; flex: none; }
.ex-title { height: 25px; display: flex; align-items: center; gap: 3px; }
.big { font-size: 12.800px; --sx: .78; }
.explorer .wide { --sx: .795; }
.tabs { height: 27px; display: flex; margin-right: 2px; border-bottom: 1px solid #d9dadb; }
.tab { display: flex; align-items: center; justify-content: center; width: 52px; color: #444; padding-top: 1px; }
.tab .t { transform-origin: 50% 50%; }
.tab.file { width: 48px; background: #0064b1; color: #fff; height: 26px; padding-right: 2px; }
.tab.on { width: 83px; height: 27px; background: #f4f5f7; border: 1px solid #d9dadb; border-bottom: 0; padding-right: 2px; }
.ribbon { height: 103px; display: flex; background: #f4f5f7; border-bottom: 2px solid #e0e1e3; margin-right: 2px; color: #3f3f46; padding-top: 2px; }
.group { height: 96px; border-right: 1px solid #dfe0e2; display: flex; flex-direction: column; justify-content: space-between; }
.g-local { width: 163px; }
.g-rede { width: 193px; }
.g-sys { width: 267px; }
.btns, .sysrow { display: flex; }
.btn { --sx: .8; display: flex; flex-direction: column; align-items: center; line-height: 14.300px; flex: none; }
.btn .t, .cap .t { transform-origin: 50% 50%; }
.ic { height: 46px; display: flex; align-items: flex-start; padding-top: 8px; flex: none; }
.ic .gear { margin-top: -2px; }
.ic.low { padding-top: 18px; }
.off { color: #97999d; }
.w-prop { width: 71px; }
.w-abrir { width: 32px; }
.w-ren { width: 56px; }
.w-media { width: 46px; }
.w-media .ic { padding-top: 5px; }
.w-map { width: 73px; }
.w-add { width: 71px; }
.w-add .ic { padding-top: 11px; }
.w-conf { width: 77px; }
.dd { display: inline-block; vertical-align: 3px; overflow: visible; margin-left: 1px; }
.cap { display: flex; justify-content: center; height: 18px; line-height: 18px; color: #5b5b60; margin-bottom: -3px; padding-right: 1px; }
.links { padding: 3px 0 0 1px; }
.links li { display: flex; align-items: center; gap: 3px; height: 24.600px; }
.qat { height: 27px; margin-right: 2px; display: flex; align-items: center; padding-left: 4px; border-bottom: 1px solid #ececec; }
.qat svg + svg { margin-left: 8px; }
.qat svg:last-child { margin-left: 10px; margin-top: 2px; }
.addr { height: 39px; padding-top: 7px; display: flex; }
.nav { margin: 8px 0 0 9px; }
.box { flex: 1; height: 32px; border: 1px solid #d7d7d7; border-right: 0; margin: 0 2px 0 0; display: flex; align-items: center; padding: 0 0 3px 1px; }
.box .t { margin-top: 2px; }
.sep { margin: 2px 8px 0 4px; }
.epson { --sx: .8; font-size: 12.500px; height: 32px; display: flex; align-items: center; border-bottom: 2px solid #efefef; margin-right: 2px; padding: 10px 0 0 5px; }
.brand { width: 51px; color: #1c2a86; font: bold 16px/16px "Liberation Sans", sans-serif; }
.brand b { display: inline-block; transform: scaleX(.81); transform-origin: 0 50%; }
.easy { width: 84px; white-space: nowrap; }
.pp { margin: 0 5px 0 6px; }
.body { display: flex; flex: 1; min-height: 0; }
.side { --sx: .785; font-size: 12.700px; width: 164px; padding-top: 16px; border-right: 1px solid #f1f1f1; display: flex; flex-direction: column; gap: 8.600px; }
.item { display: flex; align-items: center; height: 27px; margin: 0 2px 0 0; padding: 0 0 0 20px; gap: 4px; flex: none; }
.sel { background: #d9d9d9; }
.dr { padding-left: 21px; gap: 6px; }
.dr svg { margin-top: 6px; }
.content { --sx: .775; font-size: 12.600px; flex: 1; padding: 10px 2px 0 5px; min-width: 0; }
h2 { display: flex; align-items: center; margin: 0; height: 20px; color: #24418e; font-size: 16.200px; gap: 5px; line-height: 20px; }
h2::after { content: ""; flex: 1; height: 1px; background: #e4e4e4; }
.hw { width: 56px; flex: none; white-space: nowrap; }
.h-dev .hw { width: 159px; }
.grid { display: grid; grid-template-columns: repeat(3, 226px); grid-auto-rows: 62px; }
.folders { padding: 15px 0 0 37px; height: 134px; }
.fold { display: flex; gap: 5px; }
.fold > .t { margin-top: 4px; }
.fi { height: 46px; }
.fi svg { margin-top: -1px; }
.drives { padding: 11px 0 0 33px; }
.drv { display: flex; gap: 6px; }
.di { height: 48px; width: 38px; display: flex; align-items: flex-end; }
.dt { display: flex; flex-direction: column; align-items: flex-start; width: 150px; }
.bar { width: 150px; height: 14px; margin: 2px 0; border: 1px solid #bcbcbc; background: #e6e6e6; flex: none; }
.bar i { display: block; height: 100%; background: #26a0da; }
.free { color: #6f6f6f; --sx: .765; margin-top: 1px; }

/* management console */
.mmc { --sx: .93; width: 861px; height: 607px; margin: 4px 0 0 1px; border: 1px solid #8a8a8a; border-bottom-color: #4e5a6a; background: #f0f0f0; font-size: 10.700px; line-height: 13px; color: #1e1e1e; display: flex; flex-direction: column; flex: none; }
.m-title { height: 26px; background: #fff; display: flex; align-items: center; padding: 0 13px 0 7px; gap: 4px; }
.ctl { margin: -3px 0 0 auto; }
.menu { height: 19px; background: #fff; border-bottom: 1px solid #d5d5d5; display: grid; grid-template-columns: 51px 37px 40px 60px; padding: 3px 0 0 8px; }
.tools { height: 20px; background: #fff; display: flex; align-items: center; padding: 1px 0 0 4px; border-bottom: 1px solid #dcdcdc; }
.a2 { margin-left: 6px; }
.bar-v { width: 1px; height: 15px; background: #b5b5b5; }
.v1 { margin-left: 5px; }
.a3 { margin-left: 8px; }
.hot { width: 20px; height: 19px; margin-left: 3px; background: #cce8ff; border: 1px solid #a8d6f8; display: flex; align-items: center; justify-content: center; }
.v2 { margin-left: 2px; }
.a4 { margin-left: 8px; }
.hot.h2 { margin-left: 5px; }
.v3 { margin-left: 2px; }
.a5 { margin-left: 6px; }
.a6 { margin-left: 8px; }
.a7 { margin-left: 8px; }
.panes { height: 516px; padding-top: 5px; display: flex; }
.tree { --sx: .918; width: 165px; height: 515px; border: 1px solid #828790; border-left: 0; background: #fff; overflow: hidden; display: flex; flex-direction: column; justify-content: space-between; flex: none; }
.tree ul { padding: 1px 1px 0 0; overflow: hidden; }
.tree li { height: 15.440px; display: flex; align-items: center; }
.ti { width: 15px; display: flex; justify-content: center; margin-right: 3px; flex: none; }
.l0 { --sx: .93; padding-left: 3px; }
.l0 .ti { margin-right: 4px; }
.ch { flex: none; }
.l1 .ch { width: 9px; margin: 0 6px 0 6px; }
.l2 .ch { width: 5px; margin: 0 6px 0 25px; }
.l1 .ti { margin-right: 3px; }
.l2 .ti { margin-right: 5px; }
.cur { background: linear-gradient(90deg, #fff 36px, #d9d9d9 36px); }
.hs { height: 14px; background: #f0f0f0; display: flex; align-items: center; padding: 0 5px 0 6px; }
.hs .thumb { height: 14px; width: 107px; background: #cdcdcd; margin: 0 auto 0 4px; }
.center { width: 522px; height: 514px; margin-left: 3px; border: 1px solid #9b9b9b; border-left: 2px solid #777; border-top: 2px solid #777; display: flex; flex-direction: column; flex: none; overflow: hidden; }
.vols { display: block; height: 240px; background: #fff; }
.vols thead, .vols tbody { display: block; }
.vols tr { display: grid; grid-template-columns: 90px 46px 40px 104px 1fr; }
.vols thead tr { height: 16px; background: #f0f0f0; border-bottom: 1px solid #777; }
.vols th { padding: 1px 0 0 5px; text-align: left; border-right: 1px solid #777; border-left: 1px solid #fff; white-space: nowrap; min-width: 0; }
.vols th:last-child { border-right: 0; }
.vols td { padding: 0 0 0 6px; height: 14.650px; display: flex; align-items: center; gap: 3px; min-width: 0; }
.vols td:first-child { padding-left: 2px; }
.vols tbody { padding-top: 1px; }
.vols td:last-child { --sx: .937; }
.center .hs { height: 14px; flex: none; }
.center .hs .thumb { width: 272px; height: 13px; }
.disks { height: 235px; margin-top: 5px; border-top: 2px solid #777; display: flex; flex: none; }
.rows { width: 504px; padding-top: 5px; }
.disk { height: 85px; display: flex; border-bottom: 2px solid #b0b0b0; }
.disk.cd { height: 59px; border: 0; }
.lab { width: 91px; border-right: 1px solid #999; padding: 8px 0 0 7px; display: flex; flex-direction: column; align-items: flex-start; line-height: 12.900px; flex: none; margin-bottom: -2px; box-shadow: inset -2px 0 0 #fafafa; }
.nm { display: flex; gap: 2px; padding-left: 2px; }
.nm svg { margin-top: 1px; }
.nm .cdi { margin-top: -5px; }
b.t { font-weight: 700; --sx: .93; }
.explorer b.t { font-weight: 400; --sx: .785; }
.parts { display: flex; align-items: flex-start; }
.part { height: 80px; padding: 5px 0 0 1px; border-right: 1px solid #aaa; border-bottom: 1px solid #aaa; }
.blue { height: 12px; background: #000080; border: 1px solid #44448c; margin-right: 1px; }
.inner { background: #fff; margin: 2px 3px 3px 2px; height: 58px; border: 1px solid #a0a0a0; border-right: 0; border-bottom: 0; padding: 3px 0 0 3px; overflow: hidden; display: flex; flex-direction: column; align-items: flex-start; line-height: 13px; }
.p1 { width: 210px; }
.d0 .p2 { width: 171px; padding-left: 3px; }
.d1 .p2 { width: 202px; }
.vs { flex: 1; display: flex; flex-direction: column; align-items: center; padding: 6px 0 4px; border-left: 1px solid #fff; }
.vs i { width: 13px; height: 152px; margin: 3px 0 auto; background: #cdcdcd; }
.legend { display: flex; align-items: center; flex: 1; border-top: 1px solid #fafafa; padding-left: 4px; }
.k { width: 10px; height: 11px; background: #0a0a0a; border: 1px solid #888; margin-right: 4px; }
.k.b { background: #000080; }
.n1 { width: 63px; }
.actions { width: 164px; height: 514px; margin-left: 3px; background: #fff; border-left: 2px solid #6e6e6e; border-top: 2px solid #777; }
.ah { height: 18px; background: #f0f0f0; border-bottom: 1px solid #9a9a9a; padding: 3px 0 0 4px; }
.ab { height: 21px; margin-top: 1px; background: linear-gradient(#b4cfea, #9ab4d0); color: #1d3558; display: flex; align-items: center; justify-content: space-between; padding: 0 7px 0 6px; }
.am { height: 20px; display: flex; align-items: center; justify-content: space-between; padding: 0 7px 0 27px; }
.status { flex: 1; display: flex; justify-content: flex-end; padding: 2px 3px 1px 0; }
.status i { border-right: 1px solid #d2d2d2; width: 74px; }
.status i:nth-child(2) { width: 116px; }

/* callouts */
.marks { position: absolute; left: 0; top: 0; }
```
